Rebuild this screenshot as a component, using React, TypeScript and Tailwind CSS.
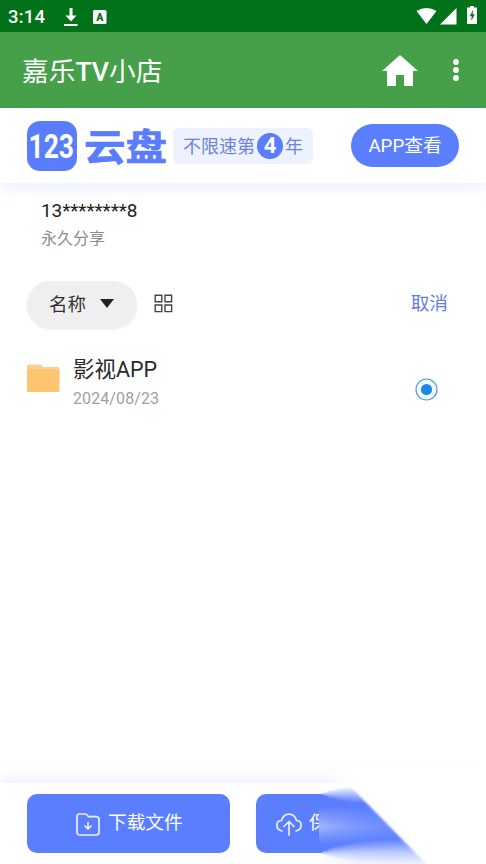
import React from "react";

const font = "font-['Roboto','Noto_Sans_CJK_SC',sans-serif]";

function StatusBar() {
  return (
    <div className="flex h-8 shrink-0 items-center bg-[#01721a] pl-[8px] pr-[9px] pt-[2px] text-white">
      <span className="w-[38px] text-[18.500px] font-medium leading-none tracking-[0.2px]">3:14</span>
      <svg className="ml-[18px]" width="14" height="20" viewBox="0 0 14 20" fill="white">
        <path d="M5.500 1h3v7.500h4L7 14.500 1.500 8.500h4zM0 17h13.500v2H0z" />
      </svg>
      <svg className="mb-[1px] ml-[15px]" width="14" height="14" viewBox="0 0 14 14">
        <rect width="13.500" height="14" rx="1.500" fill="white" />
        <text x="6.800" y="10.500" fontSize="10.500" fontWeight="900" textAnchor="middle" fill="#01721a">A</text>
      </svg>
      <svg className="mb-[2px] ml-auto" width="22" height="18" viewBox="0 0 22 18" fill="white">
        <path d="M0.500 4Q10.500-2 20.500 4L10.500 17z" />
      </svg>
      <svg className="mb-[2px] ml-[2px]" width="17" height="17" viewBox="0 0 17 17" fill="white">
        <path d="M16.500 0v16.500H0z" />
      </svg>
      <svg className="mb-[4px] ml-[10px]" width="10" height="18" viewBox="0 0 10 18">
        <path d="M3 0h4v1.500h2.500a.5.5 0 0 1 .5.5v15.500a.5.5 0 0 1-.5.5H.5a.5.5 0 0 1-.5-.5V2a.5.5 0 0 1 .5-.5H3z" fill="white" />
        <path d="M6 4.500 3 10h2l-.5 4L7.500 8.500h-2z" fill="#01721a" stroke="#01721a" strokeWidth=".4" />
      </svg>
    </div>
  );
}

function TitleBar() {
  return (
    <div className="flex h-[76px] shrink-0 items-center bg-[#45a049] pl-[22px] text-white">
      <h1 className="whitespace-nowrap pt-[5px] text-[26.700px] font-normal leading-none">
        嘉乐<span className="font-medium">TV</span>小店
      </h1>
      <svg className="ml-auto mr-[34px]" width="36" height="31" viewBox="0 0 36 31" fill="white">
        <path d="M18 0 36 16h-5v15h-9V20h-8v11H5V16H0z" />
      </svg>
      <svg className="mr-[26px]" width="8" height="24" viewBox="0 0 8 24" fill="white">
        <circle cx="4" cy="4" r="2.900" />
        <circle cx="4" cy="12" r="2.900" />
        <circle cx="4" cy="20" r="2.900" />
      </svg>
    </div>
  );
}

function BrandHeader() {
  return (
    <header className="flex h-[75px] shrink-0 items-center bg-white pl-[27px] shadow-[0_4px_14px_rgba(90,120,250,0.13)]">
      <svg width="141" height="50" viewBox="0 0 141 50" fill="#597dfc">
        <rect width="50" height="50" rx="13" />
        <text x="1.500" y="36.500" fontSize="33" fontWeight="700" textLength="45.500" lengthAdjust="spacingAndGlyphs" fill="white">123</text>
        <text x="57" y="41" fontSize="41" fontWeight="700" textLength="83" lengthAdjust="spacingAndGlyphs" stroke="#597dfc" strokeWidth=".8" transform="translate(0 2.700) scale(1 .91)">云盘</text>
      </svg>
      <div className="ml-[5px] flex h-[36px] w-[140px] items-center justify-center rounded-[6px] bg-[#eef2ff] text-[18px] leading-none text-[#6b83dc]">
        <span className="pt-[2px]">不限速第</span>
        <span className="mx-[2px] flex h-[26px] w-[26px] items-center justify-center rounded-full bg-[#597dfc] text-[22px] font-bold text-white">4</span>
        <span className="pt-[2px]">年</span>
      </div>
      <button className="ml-[38px] h-[43px] w-[108px] rounded-full bg-[#5b7efe] pt-[1px] text-[18.700px] leading-none text-white">APP查看</button>
    </header>
  );
}

function Toolbar() {
  return (
    <div className="mt-[32px] flex h-[48px] items-center pl-[27px] pr-[38px]">
      <button className="flex h-[48px] w-[110px] items-center rounded-full bg-[#efefef] pl-[22px] text-[18.500px] leading-none text-[#303133] shadow-[0_1px_3px_rgba(0,0,0,0.06)]">
        <span>名称</span>
        <svg className="ml-[14px] mb-[3px]" width="14" height="9" viewBox="0 0 14 9"><path d="M0 0h14L7 9z" fill="#222" /></svg>
      </button>
      <svg className="mb-[4px] ml-[17px]" width="19" height="19" viewBox="0 0 19 19" fill="none" stroke="#444" strokeWidth="1.400">
        <path d="M1.200 1.200h6.600v6.600H1.200zM11 1.200h6.600v6.600H11zM1.200 11h6.600v6.600H1.200zM11 11h6.600v6.600H11z" />
      </svg>
      <span className="ml-auto pb-[2px] text-[18.700px] leading-none text-[#667ddc]">取消</span>
    </div>
  );
}

function FileRow() {
  return (
    <div className="mt-[26px] flex h-[60px] pl-[27px] pr-[48px]">
      <svg className="mt-[9px]" width="33" height="29" viewBox="0 0 33 29">
        <path d="M0 2Q0 .5 1.500.5H13q1 0 2 1l1.500 1.500H31q1.500 0 1.500 2V12H0z" fill="#f9cf9b" />
        <rect y="5" width="32.500" height="23" rx="1.500" fill="#ffc470" />
      </svg>
      <div className="ml-[13px] flex flex-col whitespace-nowrap">
        <span className="pt-[3px] text-[21.500px] leading-[24px] text-[#2a2a2a]">影视APP</span>
        <span className="mt-[8px] text-[16px] leading-[18px] tracking-[0.1px] text-[#a0a0a0]">2024/08/23</span>
      </div>
      <svg className="ml-auto mt-[23px]" width="23" height="23" viewBox="0 0 23 23">
        <circle cx="11.500" cy="11.500" r="10.500" fill="#f2fdff" stroke="#529fdb" strokeWidth="1.200" />
        <circle cx="11.500" cy="11.500" r="5.600" fill="#1e88e5" />
      </svg>
    </div>
  );
}

const STEP = 3;
const columns = Array.from({ length: 38 }, (_, i) => {
  const x = i * STEP;
  return {
    x,
    spread: 0.5 + 14 * (1 - Math.exp(-x / 24)),
    streak: 0.42 * Math.exp(-x / 55),
    floor: 0.1 * (1 - Math.exp(-x / 20)),
  };
});

/* Buttons streak sideways and fade along the diagonal edge of a page fold. */
function FoldSmear() {
  return (
    <svg className="absolute bottom-0 right-0" width="167" height="96" viewBox="0 0 167 96">
      <defs>
        {columns.map(({ x, spread, streak, floor }) => (
          <React.Fragment key={x}>
            <linearGradient id={`band${x}`} x1="0" y1="0" x2="0" y2="110" gradientUnits="userSpaceOnUse">
              <stop offset={(26 - spread * 0.8) / 110} stopColor="#5b7efe" stopOpacity="0" />
              <stop offset={26 / 110} stopColor="#5b7efe" stopOpacity=".5" />
              <stop offset={(26 + spread * 0.8) / 110} stopColor="#5b7efe" />
              <stop offset={(85 - spread) / 110} stopColor="#5b7efe" />
              <stop offset={85 / 110} stopColor="#5b7efe" stopOpacity=".38" />
              <stop offset={(85 + spread * 0.8) / 110} stopColor="#5b7efe" stopOpacity={floor} />
            </linearGradient>
            <linearGradient id={`streak${x}`} x1="0" y1="38" x2="0" y2="76" gradientUnits="userSpaceOnUse">
              <stop offset="0" stopColor="#fff" stopOpacity="0" />
              <stop offset=".35" stopColor="#fff" stopOpacity={streak * 0.65} />
              <stop offset=".55" stopColor="#fff" stopOpacity={streak} />
              <stop offset="1" stopColor="#fff" stopOpacity="0" />
            </linearGradient>
          </React.Fragment>
        ))}
        <linearGradient id="shade">
          <stop offset="0" stopColor="#fff" stopOpacity="0" />
          <stop offset=".2" stopColor="#fff" />
        </linearGradient>
        <filter id="soft" x="-20%" y="-20%" width="140%" height="140%">
          <feGaussianBlur stdDeviation=".9" />
        </filter>
        <mask id="fold" maskUnits="userSpaceOnUse" x="0" y="0" width="167" height="96">
          <path d="M-10-10H5L31 18 119 108H-10z" fill="white" filter="url(#soft)" />
        </mask>
      </defs>
      <rect width="167" height="16" fill="url(#shade)" />
      <rect y="15" width="167" height="81" fill="white" />
      <g mask="url(#fold)" shapeRendering="crispEdges">
        {columns.map(({ x }) => (
          <React.Fragment key={x}>
            <rect x={x} width={STEP} height="96" fill={`url(#band${x})`} />
            <rect x={x} y="38" width={STEP} height="38" fill={`url(#streak${x})`} />
          </React.Fragment>
        ))}
      </g>
    </svg>
  );
}

function BottomBar() {
  return (
    <footer className="relative flex h-[81px] shrink-0 bg-white pl-[27px] pt-[11px] shadow-[0_-4px_14px_rgba(90,120,250,0.12)]">
      <button className="flex h-[59px] w-[203px] items-center rounded-[10px] bg-[#5b7efe] pl-[49px] text-[18.700px] leading-none text-white">
        <svg className="mt-[1px]" width="24" height="23" viewBox="0 0 24 23" fill="none" stroke="#e8f0ff" strokeWidth="1.700" strokeLinecap="round" strokeLinejoin="round">
          <path d="M1 3.500Q1 1 3.500 1H9q1.200 0 2 1l1.500 1.700H20Q23 3.700 23 6.500V19q0 3-3 3H4q-3 0-3-3zM12 9.500v6.500M9 13l3 3 3-3" />
        </svg>
        <span className="ml-[8px]">下载文件</span>
      </button>
      <button className="ml-[26px] flex h-[59px] w-[203px] items-center whitespace-nowrap rounded-[10px] bg-[#5b7efe] pl-[20px] text-[18.700px] leading-none text-white">
        <svg className="mt-[2px]" width="26" height="23" viewBox="0 0 26 23" fill="none" stroke="#e8f0ff" strokeWidth="1.700" strokeLinecap="round" strokeLinejoin="round">
          <path d="M6 18C-1 16-.5 8 5.500 7.500 8-1 18-1 20.500 7.500 26.500 8 27 16 20 18M13 22V9M8 13.500l5-5 5 5" />
        </svg>
        <span className="ml-[7px]">保</span>
      </button>
      <FoldSmear />
    </footer>
  );
}

export default function App() {
  return (
    <div className={`flex h-[864px] w-[486px] flex-col overflow-hidden bg-white ${font}`}>
      <StatusBar />
      <TitleBar />
      <BrandHeader />
      <main className="flex-1">
        <div className="flex flex-col pl-[41px] pt-[17px]">
          <span className="text-[19px] leading-[22px] tracking-[-0.1px] text-[#222]">13********8</span>
          <span className="mt-[7px] text-[16px] leading-[20px] text-[#8c8c8c]">永久分享</span>
        </div>
        <Toolbar />
        <FileRow />
      </main>
      <BottomBar />
    </div>
  );
}
